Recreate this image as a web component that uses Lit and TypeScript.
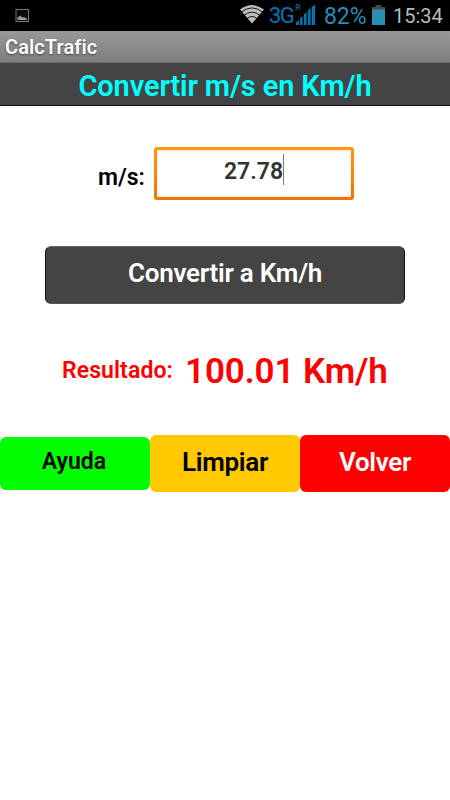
import { LitElement, html, css } from "lit";
import { customElement } from "lit/decorators.js";

@customElement("status-bar")
class StatusBar extends LitElement {
  static styles = css`
    :host { display: flex; height: 31px; background: #000; justify-content: space-between; box-sizing: border-box; padding: 0 8px 0 15px; font-weight: 400; }
    svg { display: block; flex: none; }
    .photo { margin-top: 8px; }
    .right { display: flex; align-items: flex-start; }
    .wifi { margin-top: 5px; }
    .net { font-size: 22px; line-height: 26px; margin: 3px 0 0 5px; width: 24px; color: #0773b3; letter-spacing: -1.6px; white-space: nowrap; }
    .signal { margin: 3px 0 0 2px; }
    .pct { font-size: 23px; line-height: 26px; margin: 4px 0 0 8px; width: 43px; color: #2a8db4; letter-spacing: -0.1px; white-space: nowrap; }
    .battery { margin: 5px 0 0 5px; }
    .time { font-size: 20px; line-height: 26px; margin: 3px 0 0 8px; width: 49px; color: #b9b9b9; white-space: nowrap; }
  `;
  render() {
    return html`
      <svg class="photo" width="15" height="15" viewBox="0 0 15 15">
        <rect x="1" y="1.5" width="12.5" height="12" fill="#0b0b0b" stroke="#777" stroke-width="1"/>
        <path d="M2.500 12V9.500L4 8.500L5 7.500L6.500 9L8 9.500L9.500 9L11 10.500L12 10.500V12Z" fill="#999"/>
      </svg>
      <div class="right">
        <svg class="wifi" width="24" height="19" viewBox="0 0 24 19">
          <path d="M0 4.500Q12-4.500 24 4.500L12 18.500Z" fill="#bcbcbc"/>
          <path d="M1 7.300Q12-1.500 23 7.300M3.500 10.700Q12 3.500 20.500 10.700M6.500 14Q12 9 17.500 14" fill="none" stroke="#000" stroke-width="0.900"/>
        </svg>
        <span class="net">3G</span>
        <svg class="signal" width="21" height="23" viewBox="0 0 21 23">
          <path d="M1.200 7V1.500H3Q4.600 1.500 4.600 3T3 4.300H1.500M3 4.300L4.800 7" fill="none" stroke="#0773b3" stroke-width="1"/>
          <path d="M1 22V19.500L4 17V22ZM5 22V15.500L7.600 13V22ZM8.900 22V11.500L11.600 9V22ZM12.900 22V7.500L15.600 5V22ZM16.800 22V4L20 1.500V22Z" fill="#0773b3"/>
        </svg>
        <span class="pct">82%</span>
        <svg class="battery" width="13" height="20" viewBox="0 0 13 20">
          <path d="M3.500 0H9.500V2H13V5H0V2H3.500Z" fill="#484848"/>
          <path d="M0 4.500H13V20H0Z" fill="#2a8db4"/>
        </svg>
        <span class="time">15:34</span>
      </div>`;
  }
}

@customElement("app-root")
class AppRoot extends LitElement {
  static styles = css`
    :host { display: block; height: 800px; background: #fff; font-family: Roboto, "Liberation Sans", sans-serif; font-weight: 600; overflow: hidden; }
    .title { height: 32px; box-sizing: border-box; padding-left: 5px; background: linear-gradient(#999, #7d7d7d); border-bottom: 1px solid #6c6c6c; color: #fff; font-size: 20px; line-height: 32px; letter-spacing: 0.1px; text-shadow: 0 1px 2px #444; }
    .heading { height: 43px; box-sizing: border-box; background: #444; border-bottom: 1px solid #111; color: #0ff; font-size: 29px; line-height: 46px; letter-spacing: -0.12px; text-align: center; white-space: nowrap; }
    .entry { display: flex; margin: 41px 0 0 98px; height: 53px; }
    .label { width: 56px; font-size: 23px; line-height: 62px; color: #000; }
    .field { width: 200px; height: 53px; box-sizing: border-box; border-radius: 3px; padding: 3px; background: linear-gradient(#ff9a08, #f07400); }
    .inner { height: 47px; background: #fff; box-shadow: inset 0 0 4px #ddd; display: flex; justify-content: center; font-size: 23px; line-height: 43px; color: #333; }
    .caret { width: 1px; height: 31px; margin-top: 4px; background: #777; }
    .convert { margin: 46px 45px 0; height: 58px; box-sizing: border-box; border: 1px solid #111; border-top-color: #666; border-bottom-color: #555; border-radius: 6px; background: #444; color: #fff; font-size: 26px; line-height: 52px; letter-spacing: -0.25px; text-align: center; }
    .result { display: flex; margin: 47px 0 0 62px; height: 40px; color: #f00; white-space: nowrap; }
    .rl { width: 123px; font-size: 23px; line-height: 40px; letter-spacing: 0.1px; }
    .rv { font-size: 35px; line-height: 42px; letter-spacing: -0.1px; }
    .row { display: flex; align-items: center; margin-top: 44px; color: #000; text-align: center; }
    .btn { width: 150px; height: 57px; border-radius: 6px; font-size: 26px; line-height: 54px; letter-spacing: -0.3px; }
    .help { background: #0f0; height: 53px; font-size: 23px; line-height: 50px; letter-spacing: 0; text-indent: -2px; }
    .clear { background: #ffc800; }
    .back { background: #f00; color: #fff; }
  `;
  render() {
    return html`
      <status-bar></status-bar>
      <div class="title">CalcTrafic</div>
      <div class="heading">Convertir m/s en Km/h</div>
      <div class="entry">
        <span class="label">m/s:</span>
        <div class="field"><div class="inner"><span class="num">27.78</span><span class="caret"></span></div></div>
      </div>
      <div class="convert">Convertir a Km/h</div>
      <div class="result"><span class="rl">Resultado:</span><span class="rv">100.01 Km/h</span></div>
      <div class="row">
        <div class="btn help">Ayuda</div>
        <div class="btn clear">Limpiar</div>
        <div class="btn back">Volver</div>
      </div>`;
  }
}
